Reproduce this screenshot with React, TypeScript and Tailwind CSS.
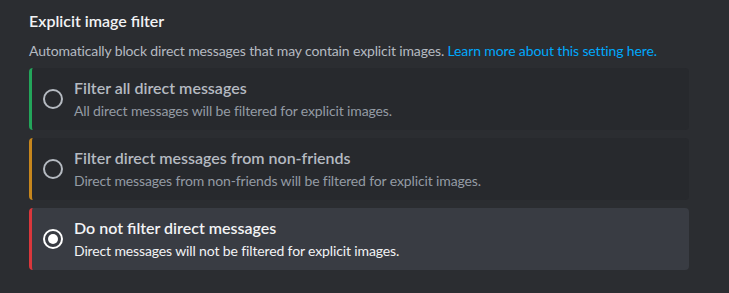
import React from 'react';

type Option = {
  title: string;
  desc: string;
  accent: string;
  selected?: boolean;
};

const options: Option[] = [
  { title: 'Filter all direct messages', desc: 'All direct messages will be filtered for explicit images.', accent: 'border-l-[#23a55a]' },
  { title: 'Filter direct messages from non-friends', desc: 'Direct messages from non-friends will be filtered for explicit images.', accent: 'border-l-[#c6861d]' },
  { title: 'Do not filter direct messages', desc: 'Direct messages will not be filtered for explicit images.', accent: 'border-l-[#da373c]', selected: true },
];

const Radio: React.FC<{ selected?: boolean }> = ({ selected }) => (
  <svg width="24" height="24" viewBox="0 0 24 24" className="shrink-0">
    <circle cx="12" cy="12" r="9" fill="none" stroke={selected ? '#ffffff' : '#b5bac1'} strokeWidth="2" />
    {selected && <circle cx="12" cy="12" r="5" fill="#ffffff" />}
  </svg>
);

export default function App() {
  return (
    <div className="w-[729px] h-[293px] bg-[#2b2d31] pl-[29px] pr-[40px] pt-[11px] font-['Lato',sans-serif]">
      <h2 className="text-[16px] leading-[20px] font-semibold text-[#f2f3f5]">Explicit image filter</h2>
      <p className="mt-[10px] text-[14px] leading-[20px] tracking-[-0.13px] text-[#b5bac1]">
        Automatically block direct messages that may contain explicit images.{' '}
        <span className="text-[#00a8fc]">Learn more about this setting here.</span>
      </p>
      <div className="mt-[7px] flex flex-col gap-[8px]">
        {options.map((o) => (
          <div
            key={o.title}
            className={`flex items-center gap-[9px] h-[62px] rounded-[4px] border-l-[3px] pl-[9px] ${o.accent} ${
              o.selected ? 'bg-[#393c43]' : 'bg-[#27292d]'
            }`}
          >
            <Radio selected={o.selected} />
            <div className="flex flex-col">
              <div className={`text-[16px] leading-[20px] font-semibold ${o.selected ? 'text-[#f2f3f5]' : 'text-[#b5bac1]'}`}>
                {o.title}
              </div>
              <div className={`mt-[4px] text-[14px] leading-[18px] tracking-[-0.13px] ${o.selected ? 'text-[#f2f3f5]' : 'text-[#949ba4]'}`}>
                {o.desc}
              </div>
            </div>
          </div>
        ))}
      </div>
    </div>
  );
}
